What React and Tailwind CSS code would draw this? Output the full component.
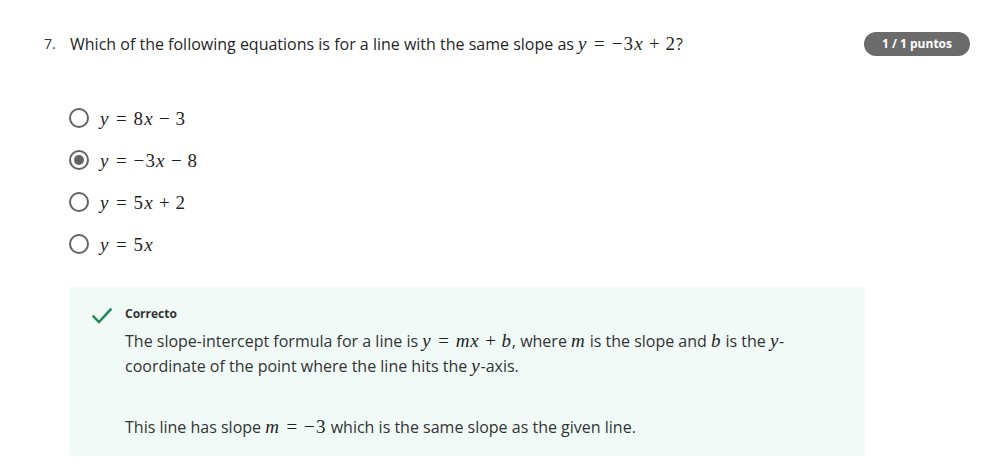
import React from 'react';

const OPTIONS = [
  { id: 'a', tex: [['v', 'y'], ['rel', '='], ['n', '8'], ['v', 'x'], ['bin', '−'], ['n', '3']] },
  { id: 'b', tex: [['v', 'y'], ['rel', '='], ['n', '−3'], ['v', 'x'], ['bin', '−'], ['n', '8']], checked: true },
  { id: 'c', tex: [['v', 'y'], ['rel', '='], ['n', '5'], ['v', 'x'], ['bin', '+'], ['n', '2']] },
  { id: 'd', tex: [['v', 'y'], ['rel', '='], ['n', '5'], ['v', 'x']] },
];

// tiny stand-in for the rendered math
function M({ parts, size = 'text-[19px]' }) {
  return (
    <span className={`font-['Liberation_Serif','DejaVu_Serif',serif] ${size} leading-none text-[#1f1f1f] whitespace-nowrap`}>
      {parts.map(([kind, s], i) => {
        if (kind === 'v') return <i key={i} className="italic tracking-[0.04em]">{s}</i>;
        if (kind === 'rel') return <span key={i} className="mx-[0.36em]">{s}</span>;
        if (kind === 'bin') return <span key={i} className="mx-[0.3em]">{s}</span>;
        return <span key={i} className="tracking-[0.06em]">{s}</span>;
      })}
    </span>
  );
}

function Radio({ checked }) {
  return (
    <span className="w-[20px] h-[20px] rounded-full border-2 border-[#636363] flex items-center justify-center shrink-0">
      {checked && <span className="w-[10px] h-[10px] rounded-full bg-[#636363]" />}
    </span>
  );
}

export default function App() {
  return (
    <div className="w-[996px] h-[474px] bg-white font-['Open_Sans',sans-serif] text-[#1f1f1f] overflow-hidden">
      <div className="flex items-start pt-[32px] pl-[44px] pr-[26px]">
        <span className="text-[14px] leading-[24px] w-[26px] text-[#333]">7.</span>
        <p className="flex-1 text-[16px] leading-[24px] text-[#1f1f1f]">
          Which of the following equations is for a line with the same slope as{' '}
          <M parts={[['v', 'y'], ['rel', '='], ['n', '−3'], ['v', 'x'], ['bin', '+'], ['n', '2']]} />?
        </p>
        <span className="h-[24px] px-[18px] rounded-full bg-[#6b6b6b] text-white text-[12px] font-bold flex items-center">
          1 / 1 puntos
        </span>
      </div>

      <div className="flex flex-col gap-[22px] pl-[69px] mt-[52px]">
        {OPTIONS.map(o => (
          <div key={o.id} className="flex items-center gap-[11px] h-[20px]">
            <Radio checked={o.checked} />
            <M parts={o.tex} />
          </div>
        ))}
      </div>

      <div className="ml-[70px] w-[795px] mt-[33px] bg-[#f1faf7] flex gap-[13px] pl-[22px] pt-[18px] pb-[16px] pr-[60px]">
        <svg width="20" height="20" viewBox="0 0 20 20" className="mt-[1px] shrink-0">
          <path d="M1.5 10.5 L7 16 L18.5 3.5" fill="none" stroke="#1b8754" strokeWidth="2.4" strokeLinecap="square" />
        </svg>
        <div className="flex flex-col">
          <span className="text-[12px] font-bold text-[#333] leading-[18px]">Correcto</span>
          <p className="mt-[6px] text-[16px] leading-[25px] text-[#333]">
            The slope-intercept formula for a line is{' '}
            <M parts={[['v', 'y'], ['rel', '='], ['v', 'mx'], ['bin', '+'], ['v', 'b']]} />, where{' '}
            <M parts={[['v', 'm']]} /> is the slope and <M parts={[['v', 'b']]} /> is the{' '}
            <M parts={[['v', 'y']]} />-coordinate of the point where the line hits the{' '}
            <M parts={[['v', 'y']]} />-axis.
          </p>
          <p className="mt-[36px] text-[16px] leading-[25px] text-[#333]">
            This line has slope <M parts={[['v', 'm'], ['rel', '='], ['n', '−3']]} /> which is the same slope as the given line.
          </p>
        </div>
      </div>
    </div>
  );
}
